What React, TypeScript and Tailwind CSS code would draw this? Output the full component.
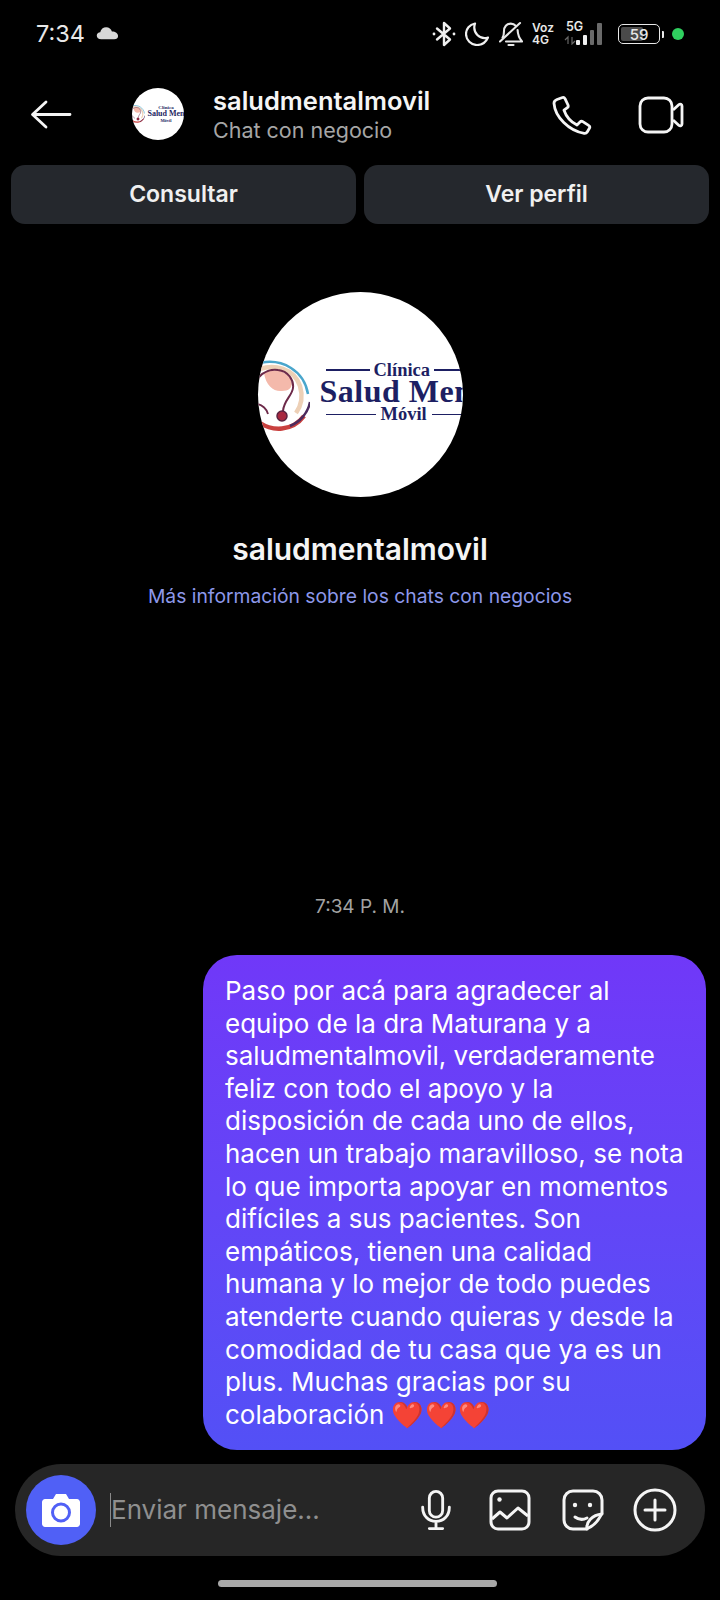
import React from 'react';

const lines = [
  'Paso por acá para agradecer al',
  'equipo de la dra Maturana y a',
  'saludmentalmovil, verdaderamente',
  'feliz con todo el apoyo y la',
  'disposición de cada uno de ellos,',
  'hacen un trabajo maravilloso, se nota',
  'lo que importa apoyar en momentos',
  'difíciles a sus pacientes. Son',
  'empáticos, tienen una calidad',
  'humana y lo mejor de todo puedes',
  'atenderte cuando quieras y desde la',
  'comodidad de tu casa que ya es un',
  'plus. Muchas gracias por su',
];

// logo mark, cropped by the round avatar
const LogoMark = ({ className }: { className: string }) => (
  <svg viewBox="0 0 52 72" className={className}>
    <path d="M6 13 C14 8 28 10 33 20 C36 28 30 31 24 31 C16 32 8 26 6 13Z" fill="#f4b9ab" />
    <path d="M2 9 C16 4 36 8 42 26 C45 36 43 46 38 53" fill="none" stroke="#edd0b6" strokeWidth="4.5" />
    <path d="M4 2.5 C24 -1 46 10 50 34" fill="none" stroke="#4aa6cc" strokeWidth="2.5" />
    <path d="M0 18 C6 11 14 9 20 10 C30 11 36 20 35 28 C34 36 26 40 25 51" fill="none" stroke="#6d2a4a" strokeWidth="2" />
    <circle cx="24" cy="56" r="5" fill="#a8283f" stroke="#5b2340" strokeWidth="1.5" />
    <path d="M0 44 C4 45 9 49 10 54" fill="none" stroke="#6d2a4a" strokeWidth="1.8" />
    <path d="M2 63 C14 71 34 72 46 56" fill="none" stroke="#c9413f" strokeWidth="4.5" />
    <path d="M32 66 C42 62 50 53 52 42" fill="none" stroke="#4b2a5e" strokeWidth="2.5" />
  </svg>
);

const AvatarLogo = ({ big }: { big: boolean }) =>
  big ? (
    <div className="w-[205px] h-[205px] rounded-full bg-white overflow-hidden shrink-0 flex items-center font-['Liberation_Serif',serif] text-[#1d1f63]">
      <LogoMark className="w-[52px] h-[72px] shrink-0 mt-[2px]" />
      <div className="flex flex-col shrink-0 ml-[10px] w-[143px] font-bold -mt-[2px]">
        <div className="flex items-center w-full pl-[6px] gap-[4px] text-[18.5px] leading-[20px]">
          <span className="w-[44px] h-[1.5px] bg-[#1d1f63]"></span>
          <span>Clínica</span>
          <span className="flex-1 h-[1.5px] bg-[#1d1f63]"></span>
        </div>
        <div className="text-[32px] leading-[22px] whitespace-nowrap tracking-[0.5px]">Salud Men</div>
        <div className="flex items-center w-full pl-[6px] gap-[5px] text-[18.5px] leading-[25px]">
          <span className="w-[50px] h-[1.5px] bg-[#1d1f63]"></span>
          <span>Móvil</span>
          <span className="flex-1 h-[1.5px] bg-[#1d1f63]"></span>
        </div>
      </div>
    </div>
  ) : (
    <div className="w-[52px] h-[52px] rounded-full bg-white overflow-hidden shrink-0 flex items-center font-['Liberation_Serif',serif] text-[#1d1f63]">
      <LogoMark className="w-[13px] h-[18px] shrink-0" />
      <div className="flex flex-col items-center shrink-0 ml-[3px] w-[36px] font-bold">
        <div className="text-[5px] leading-[5px]">Clínica</div>
        <div className="text-[8px] leading-[8px] whitespace-nowrap">Salud Men</div>
        <div className="text-[4.5px] leading-[5px]">Móvil</div>
      </div>
    </div>
  );

const StatusBar = () => (
  <div className="h-[68px] flex items-center justify-between pl-[36px] pr-[36px] text-white">
    <div className="flex items-center gap-[11px]">
      <span className="font-['Inter',sans-serif] text-[23.5px] leading-none text-[#e8e8e8]">7:34</span>
      <svg viewBox="0 0 24 14" className="w-[23px] h-[14px] -mt-[3px]" fill="#d8d8d8">
        <path d="M5.5 13.5 C2.5 13.5 .8 11.8 .8 9.8 C.8 7.8 2.4 6.4 4.4 6.3 C5 3 7.6 1 10.6 1 C13.6 1 15.8 2.8 16.6 5.4 C20.4 5.4 23 7.4 23 10 C23 12.2 21.4 13.5 19 13.5Z" />
      </svg>
    </div>
    <div className="flex items-center">
      {/* bluetooth */}
      <svg viewBox="0 0 24 26" className="w-[24px] h-[26px]" fill="none" stroke="#f0f0f0" strokeWidth="2.4" strokeLinecap="round" strokeLinejoin="round">
        <path d="M5 7.5 L18 18.5 L12 24 V2 L18 7.5 L5 18.5" />
        <circle cx="2" cy="13" r="1.4" fill="#f0f0f0" stroke="none" />
        <circle cx="22" cy="13" r="1.4" fill="#f0f0f0" stroke="none" />
      </svg>
      {/* moon */}
      <svg viewBox="0 0 24 24" className="w-[24px] h-[24px] ml-[9px]" fill="none" stroke="#f0f0f0" strokeWidth="2.2">
        <path d="M10 1.5 C4.5 2.6 1 7 1 12 C1 18 6 23 12 23 C17 23 21 20 23 15.5 C15 18 7 11 10 1.5Z" strokeLinejoin="round" />
      </svg>
      {/* bell off */}
      <svg viewBox="0 0 24 26" className="w-[24px] h-[26px] ml-[10px]" fill="none" stroke="#e8e8e8" strokeWidth="2.1" strokeLinecap="round" strokeLinejoin="round">
        <path d="M1 20.5 L21 2" />
        <path d="M17 5 C15.6 3.5 13.8 2.6 11.8 2.6 C7.6 2.6 5 6 5 10 C5 13 4.6 15 3.6 16.6" />
        <path d="M18.6 9 C18.8 14 20 17 23 20.5 H7" />
        <path d="M9.5 24 H14.5" />
      </svg>
      {/* voz 4g */}
      <div className="flex flex-col ml-[9px] font-['Inter',sans-serif] font-semibold text-[12px] leading-[12px] text-[#e8e8e8]">
        <span>Voz</span>
        <span>4G</span>
      </div>
      {/* 5g signal */}
      <div className="relative w-[46px] h-[22px] ml-[9px]">
        <span className="absolute left-[3px] -top-[2px] font-['Inter',sans-serif] font-semibold text-[12.5px] leading-[12px] text-[#e8e8e8]">5G</span>
        <svg viewBox="0 0 46 22" className="w-[46px] h-[22px]">
          <path d="M2 17 L5 14 V21 M9 14 V21 L12 18" fill="none" stroke="#666" strokeWidth="1.2" />
          <rect x="13" y="17" width="4" height="5" rx="1" fill="#f0f0f0" />
          <rect x="20" y="12" width="4" height="10" rx="1" fill="#f0f0f0" />
          <rect x="27" y="7" width="4" height="15" rx="1" fill="#6a6a6a" />
          <rect x="34" y="0" width="5" height="22" rx="1" fill="#6a6a6a" />
        </svg>
      </div>
      {/* battery */}
      <div className="flex items-center ml-[9px]">
        <div className="relative w-[42px] h-[20px] rounded-[5px] border-[1.5px] border-[#e8e8e8] flex items-center justify-center overflow-hidden">
          <div className="absolute left-[2px] top-[2px] bottom-[2px] w-[22px] rounded-[2px] bg-[#4a4a4a]"></div>
          <span className="relative font-['Inter',sans-serif] font-medium text-[15px] leading-none text-[#e8e8e8]">59</span>
        </div>
        <div className="w-[2px] h-[7px] ml-[2px] rounded-r-[1px] bg-[#e8e8e8]"></div>
      </div>
      <div className="w-[12px] h-[12px] rounded-full bg-[#2fd05f] ml-[8px]"></div>
    </div>
  </div>
);

const Header = () => (
  <div className="h-[97px] flex items-center text-white pb-[4px]">
    <svg viewBox="0 0 42 30" className="w-[42px] h-[30px] ml-[30px]" fill="none" stroke="#f5f5f5" strokeWidth="2.8" strokeLinecap="round" strokeLinejoin="round">
      <path d="M40 14.5 H3 M16 2 L2.5 14.5 L16 27" />
    </svg>
    <div className="ml-[60px] -mt-[2px]">
      <AvatarLogo big={false} />
    </div>
    <div className="ml-[29px] flex flex-col">
      <span className="font-['Inter',sans-serif] font-semibold text-[25.5px] leading-[30px] text-[#f5f5f5]">saludmentalmovil</span>
      <span className="font-['Inter',sans-serif] text-[21.5px] leading-[28px] text-[#a6a6a6]">Chat con negocio</span>
    </div>
    <svg viewBox="0 0 40 40" className="w-[40px] h-[40px] ml-auto" fill="none" stroke="#f5f5f5" strokeWidth="2.8" strokeLinejoin="round">
      <path d="M5 4.5 L10.5 2.5 C11.5 2.2 12.5 2.7 13 3.6 L16 10 C16.4 11 16.2 12 15.4 12.6 L12 15.2 C14 21 19 27 25 30 L28 27 C28.8 26.2 29.8 26 30.8 26.6 L36.6 30.4 C37.6 31 38 32.2 37.4 33.2 L35.2 37 C34.6 38 33.4 38.6 32.2 38.4 C17 36 3 22 2 8.4 C1.9 6.6 3.2 5.2 5 4.5Z" />
    </svg>
    <svg viewBox="0 0 46 38" className="w-[46px] h-[38px] ml-[46px] mr-[36px]" fill="none" stroke="#f5f5f5" strokeWidth="2.8" strokeLinejoin="round">
      <rect x="2" y="2" width="32" height="34" rx="8" />
      <path d="M35 14 L41 8.5 C42.2 7.5 44 8.4 44 10 V28 C44 29.6 42.2 30.5 41 29.5 L35 24" />
    </svg>
  </div>
);

const ActionButton = ({ label }: { label: string }) => (
  <div className="flex-1 h-[59px] rounded-[14px] bg-[#25282d] flex items-center justify-center font-['Inter',sans-serif] font-semibold text-[23px] text-[#f0f0f0]">
    {label}
  </div>
);

const InputBar = () => (
  <div className="mx-[15px] h-[92px] rounded-[46px] bg-[#262626] flex items-center pl-[11px] pr-[28px]">
    <div className="w-[70px] h-[70px] rounded-full bg-[#5060f6] flex items-center justify-center shrink-0">
      <svg viewBox="0 0 38 34" className="w-[38px] h-[34px]">
        <path d="M3 6 H11 L14 1 H24 L27 6 H35 C36.5 6 38 7.5 38 9 V31 C38 32.5 36.5 34 35 34 H3 C1.5 34 0 32.5 0 31 V9 C0 7.5 1.5 6 3 6Z" fill="#fff" />
        <circle cx="19" cy="19.5" r="8.5" fill="#fff" stroke="#5060f6" strokeWidth="3" />
      </svg>
    </div>
    <div className="ml-[14px] w-[1px] h-[34px] bg-[#8a8a8a]"></div>
    <span className="font-['Inter',sans-serif] text-[26px] text-[#8f8f8f] leading-none">Enviar mensaje...</span>
    <svg viewBox="0 0 32 42" className="w-[32px] h-[40px] ml-auto mr-[5px]" fill="none" stroke="#f5f5f5" strokeWidth="3" strokeLinecap="round">
      <rect x="9" y="1.5" width="14" height="27" rx="7" />
      <path d="M2 18 C2 27 8 33 16 33 C24 33 30 27 30 18 M16 33 V40 M9 40.5 H23" />
    </svg>
    <svg viewBox="0 0 42 42" className="w-[42px] h-[42px] ml-[32px]" fill="none" stroke="#f5f5f5" strokeWidth="3" strokeLinejoin="round">
      <rect x="2" y="2" width="38" height="38" rx="7" />
      <circle cx="10.5" cy="10.5" r="2.2" fill="#f5f5f5" stroke="none" />
      <path d="M3 30 L11 23 L18 29 L29 19 L39 27" />
    </svg>
    <svg viewBox="0 0 42 42" className="w-[42px] h-[42px] ml-[31px]" fill="none" stroke="#f5f5f5" strokeWidth="3" strokeLinejoin="round" strokeLinecap="round">
      <path d="M24 40 H11 C6 40 2 36 2 31 V11 C2 6 6 2 11 2 H31 C36 2 40 6 40 11 V24 C36 33 30 38 24 40Z" />
      <path d="M25 40 C24 33 30 26 40 25" />
      <path d="M13 28 C17 31 21 31 25 29" />
      <circle cx="13" cy="16" r="2.2" fill="#f5f5f5" stroke="none" />
      <circle cx="28" cy="16" r="2.2" fill="#f5f5f5" stroke="none" />
    </svg>
    <svg viewBox="0 0 44 44" className="w-[44px] h-[44px] ml-[29px]" fill="none" stroke="#f5f5f5" strokeWidth="3" strokeLinecap="round">
      <circle cx="22" cy="22" r="20" />
      <path d="M22 12 V32 M12 22 H32" />
    </svg>
  </div>
);

export default function App() {
  return (
    <div className="w-[720px] h-[1600px] bg-black flex flex-col overflow-hidden font-['Inter',sans-serif]">
      <StatusBar />
      <Header />

      <div className="flex gap-[8px] px-[11px]">
        <ActionButton label="Consultar" />
        <ActionButton label="Ver perfil" />
      </div>

      <div className="flex flex-col items-center mt-[68px]">
        <AvatarLogo big={true} />
        <div className="mt-[32px] font-semibold text-[30px] leading-[40px] text-[#f5f5f5]">saludmentalmovil</div>
        <div className="mt-[14px] text-[19.3px] leading-[26px] text-[#8d98ea]">Más información sobre los chats con negocios</div>
      </div>

      <div className="mt-[286px] text-center text-[19px] leading-[24px] text-[#a3a3a3]">7:34 P. M.</div>

      <div className="mt-[36px] self-end mr-[14px] w-[503px] h-[495px] rounded-[34px] bg-gradient-to-b from-[#7038f8] to-[#5350f6] pl-[22px] pt-[20px] text-[26px] leading-[32.6px] text-white whitespace-nowrap">
        {lines.map((l) => (
          <div key={l}>{l}</div>
        ))}
        <div>
          colaboración <span className="font-['Noto_Color_Emoji',sans-serif] text-[26px] tracking-[1px]">❤❤❤</span>
        </div>
      </div>

      <div className="mt-[14px]">
        <InputBar />
      </div>
      <div className="mt-[24px] ml-[218px] w-[279px] h-[7px] rounded-full bg-[#a8a8a8]"></div>
    </div>
  );
}
